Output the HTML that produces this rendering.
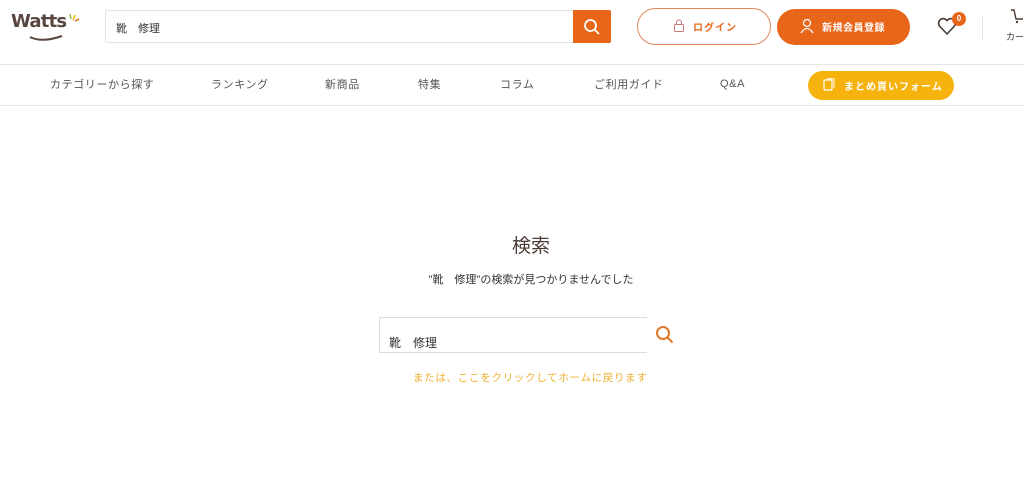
<!DOCTYPE html>
<html><head><meta charset="utf-8"><style>
*{margin:0;padding:0;box-sizing:border-box}
body{width:1024px;height:495px;overflow:hidden;background:#fff;font-family:"Liberation Sans","Noto Sans CJK JP",sans-serif;color:#4a3c36;position:relative}
.abs{position:absolute;white-space:nowrap}
.nav span{position:absolute;top:76px;height:18px;line-height:18px;font-size:11px;color:#555;letter-spacing:0.6px;white-space:nowrap}
</style></head><body>
<div class="abs" style="left:11px;top:11px;font-weight:bold;font-size:18px;color:#5a4640;letter-spacing:-0.8px;font-family:'DejaVu Sans',sans-serif">Watts</div>
<svg class="abs" style="left:10px;top:10px" width="70" height="32"><path d="M20 27 Q32 33 52 26" stroke="#5a4640" stroke-width="2" fill="none"/><path d="M60 4 L61 9" stroke="#8bc34a" stroke-width="1.5"/><path d="M65 5 L63 10" stroke="#f0b400" stroke-width="1.5"/><path d="M69 9 L65 11" stroke="#e8661a" stroke-width="1.5"/></svg>
<div class="abs" style="left:105px;top:10px;width:469px;height:33px;border:1px solid #e4e4e4;border-right:none;border-radius:2px 0 0 2px"></div>
<div class="abs" style="left:116px;top:20px;font-size:11px;color:#333">靴　修理</div>
<div class="abs" style="left:573px;top:10px;width:38px;height:33px;background:#e8661a;border-radius:0 2px 2px 0"></div>
<svg class="abs" style="left:583px;top:18px" width="18" height="18"><circle cx="7.5" cy="7.5" r="5.5" stroke="#fff" stroke-width="1.8" fill="none"/><path d="M11.5 11.5 L16 16" stroke="#fff" stroke-width="1.8"/></svg>
<div class="abs" style="left:637px;top:8px;width:134px;height:37px;border:1px solid #e0885a;border-radius:19px"></div>
<svg class="abs" style="left:673px;top:19px" width="12" height="14"><rect x="1.5" y="5.5" width="9" height="7" rx="1" stroke="#c77" fill="none"/><path d="M3.5 5.5 V3.5 a2.5 2.5 0 0 1 5 0 V5.5" stroke="#c77" fill="none"/></svg>
<div class="abs" style="left:693px;top:19px;font-size:10px;font-weight:bold;color:#e8661a;letter-spacing:1px">ログイン</div>
<div class="abs" style="left:777px;top:9px;width:133px;height:36px;background:#e8661a;border-radius:18px"></div>
<svg class="abs" style="left:800px;top:18px" width="14" height="16"><circle cx="7" cy="5" r="3.5" stroke="#fff" stroke-width="1.2" fill="none"/><path d="M1 15 Q7 6 13 15" stroke="#fff" stroke-width="1.2" fill="none"/></svg>
<div class="abs" style="left:822px;top:19px;font-size:10px;font-weight:bold;color:#fff;letter-spacing:0.5px">新規会員登録</div>
<svg class="abs" style="left:937px;top:16px" width="22" height="20"><path d="M10 18 L2.5 10 A4.5 4.5 0 0 1 10 4.5 A4.5 4.5 0 0 1 17.5 10 Z" stroke="#4a3c36" stroke-width="1.6" fill="none"/></svg>
<div class="abs" style="left:952px;top:12px;width:14px;height:14px;border-radius:7px;background:#e8661a;color:#fff;font-size:8px;font-weight:bold;text-align:center;line-height:14px">0</div>
<div class="abs" style="left:982px;top:15px;width:1px;height:26px;background:#e6e6e6"></div>
<svg class="abs" style="left:1010px;top:8px" width="14" height="16"><path d="M1 2 H4 L6 11 H13" stroke="#4a3c36" stroke-width="1.4" fill="none"/><circle cx="7" cy="14" r="1.2" fill="#4a3c36"/></svg>
<div class="abs" style="left:1006px;top:30px;font-size:9px;color:#333">カー</div>
<div class="abs" style="left:0;top:64px;width:1024px;height:1px;background:#e6e6e6"></div>
<div class="abs" style="left:0;top:105px;width:1024px;height:1px;background:#e6e6e6"></div>
<div class="nav">
<span style="left:50px">カテゴリーから探す</span>
<span style="left:211px">ランキング</span>
<span style="left:325px">新商品</span>
<span style="left:418px">特集</span>
<span style="left:500px">コラム</span>
<span style="left:594px">ご利用ガイド</span>
<span style="left:720px;top:75px">Q&amp;A</span>
</div>
<div class="abs" style="left:808px;top:71px;width:146px;height:29px;background:#f6b30e;border-radius:15px"></div>
<svg class="abs" style="left:823px;top:78px" width="12" height="14"><rect x="1" y="2" width="8" height="10" rx="1" stroke="#fff" stroke-width="1.2" fill="none"/><path d="M4 0.8 H11 V10" stroke="#fff" stroke-width="1" fill="none"/></svg>
<div class="abs" style="left:844px;top:78px;font-size:10px;font-weight:bold;color:#fff;letter-spacing:1px">まとめ買いフォーム</div>
<div class="abs" style="left:0;top:231px;width:1062px;text-align:center;font-size:19px;color:#4a3c36">検索</div>
<div class="abs" style="left:0;top:271px;width:1062px;text-align:center;font-size:11px;color:#333">"靴　修理"の検索が見つかりませんでした</div>
<div class="abs" style="left:379px;top:317px;width:268px;height:36px;border:1px solid #ddd;border-right:none"></div>
<div class="abs" style="left:389px;top:334px;font-size:12px;color:#333">靴　修理</div>
<svg class="abs" style="left:655px;top:325px" width="20" height="20"><circle cx="8" cy="8" r="6" stroke="#e0782a" stroke-width="2" fill="none"/><path d="M12.5 12.5 L17.5 17.5" stroke="#e0782a" stroke-width="2"/></svg>
<div class="abs" style="left:413px;top:370px;font-size:10.5px;color:#f0b030;letter-spacing:0.7px">または、ここをクリックしてホームに戻ります</div>
</body></html>
